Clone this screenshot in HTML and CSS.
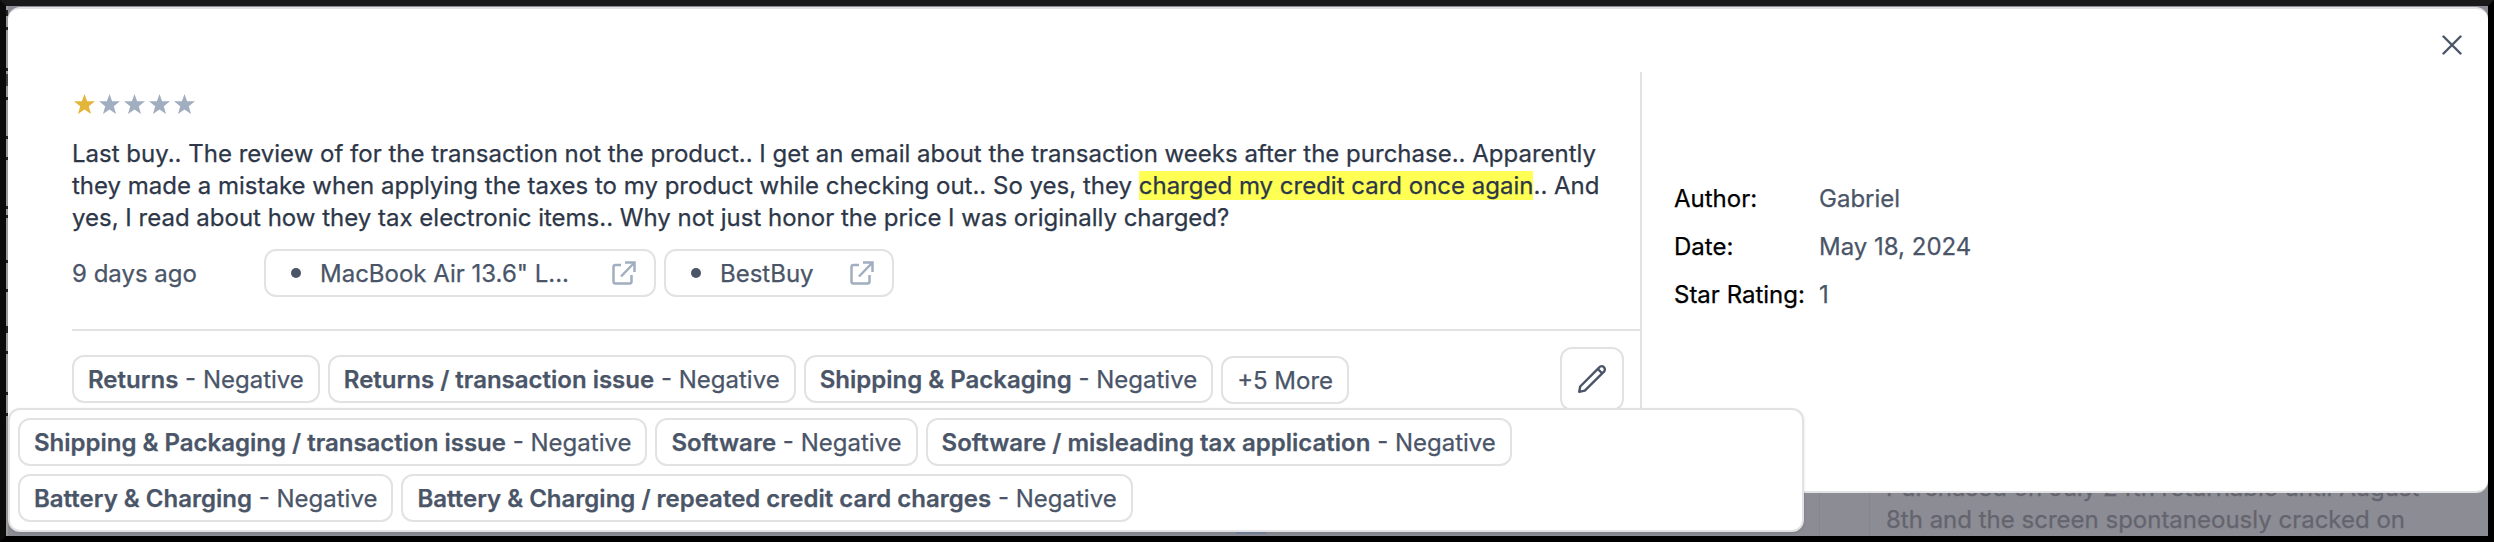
FILE: index.html
```html
<!DOCTYPE html>
<html lang="en">
<head>
<meta charset="utf-8">
<title>Review details</title>
<link rel="stylesheet" href="styles.css">
</head>
<body>
<svg class="defs" aria-hidden="true">
  <symbol id="star" viewBox="0 0 21 20"><path d="M10.5 0l2.6 7.3H21l-6.2 4.9 2.2 7.8-6.5-4.6L4 20l2.2-7.8L0 7.300h7.900z"/></symbol>
  <symbol id="external" viewBox="0 0 24 24"><path d="M9 4H3.500Q1.500 4 1.500 6V20.500Q1.500 22.500 3.500 22.500H17.500Q19.500 22.500 19.500 20.500V14M13 1.500H22.500V11M22 2L9 15.500"/></symbol>
</svg>
<div class="screen">
  <div class="backdrop">
    <div class="backdrop-icon"></div>
    <div class="backdrop-column"></div>
    <p class="backdrop-text">Purchased on July 24th returnable until August<br>8th and the screen spontaneously cracked on</p>
  </div>
  <main class="modal">
    <section class="review">
      <div class="stars">
        <svg class="star filled"><use href="#star"/></svg>
        <svg class="star"><use href="#star"/></svg>
        <svg class="star"><use href="#star"/></svg>
        <svg class="star"><use href="#star"/></svg>
        <svg class="star"><use href="#star"/></svg>
      </div>
      <p class="body">Last buy.. The review of for the transaction not the product.. I get an email about the transaction weeks after the purchase.. Apparently<br>they made a mistake when applying the taxes to my product while checking out.. So yes, they <mark>charged my credit card once again</mark>.. And<br>yes, I read about how they tax electronic items.. Why not just honor the price I was originally charged?</p>
      <div class="meta">
        <span class="age">9 days ago</span>
        <a class="source product"><i class="dot"></i><span>MacBook Air 13.6" L...</span><svg class="external"><use href="#external"/></svg></a>
        <a class="source store"><i class="dot"></i><span>BestBuy</span><svg class="external"><use href="#external"/></svg></a>
      </div>
      <div class="topics">
        <span class="chip"><b>Returns</b> - Negative</span>
        <span class="chip"><b>Returns / transaction issue</b> - Negative</span>
        <span class="chip"><b>Shipping &amp; Packaging</b> - Negative</span>
        <span class="chip more">+5 More</span>
        <button class="edit" aria-label="Edit"><svg viewBox="0 0 32 32"><path d="M3.200 28.800L4.200 23.500L23.300 4.300A3.200 3.200 0 0 1 28 8.700L8.800 27.600ZM21.800 6L26.200 10.300"/></svg></button>
      </div>
    </section>
    <aside class="details">
      <button class="close" aria-label="Close"><svg viewBox="0 0 20 20"><path d="M1.500 1.500L18.500 18.500M18.500 1.500L1.500 18.500"/></svg></button>
      <dl>
        <dt>Author:</dt><dd>Gabriel</dd>
        <dt>Date:</dt><dd>May 18, 2024</dd>
        <dt>Star Rating:</dt><dd>1</dd>
      </dl>
    </aside>
  </main>
  <div class="popover">
    <div class="popover-row">
      <span class="chip"><b>Shipping &amp; Packaging / transaction issue</b> - Negative</span>
      <span class="chip"><b>Software</b> - Negative</span>
      <span class="chip"><b>Software / misleading tax application</b> - Negative</span>
    </div>
    <div class="popover-row">
      <span class="chip"><b>Battery &amp; Charging</b> - Negative</span>
      <span class="chip"><b>Battery &amp; Charging / repeated credit card charges</b> - Negative</span>
    </div>
  </div>
</div>
</body>
</html>
```
FILE: styles.css
```css
* { box-sizing: border-box; }
body { margin: 0; font-family: Inter, "Liberation Sans", sans-serif; font-size: 24px; line-height: 32px; color: #4a5568; -webkit-text-stroke: 0.25px; }
p, dl, dd { margin: 0; }
button { background: none; padding: 0; border: 0; }
.defs { position: absolute; width: 0; height: 0; }
.screen {
  position: relative; width: 2494px; height: 542px; overflow: hidden; background: #8c8c94;
  border: 6px solid #000; border-top-color: #1a1a1a; border-left-color: #0b0b0b;
}
.backdrop {
  position: absolute; inset: 0; padding-left: 1230px; display: flex; align-items: flex-end;
  background:
    linear-gradient(#222 0 0) 0 4px / 2px 6px no-repeat,
    linear-gradient(#222 0 0) 0 21px / 2px 3px no-repeat,
    linear-gradient(#222 0 0) 0 62px / 2px 3px no-repeat,
    linear-gradient(#444 0 0) 0 68px / 2px 12px no-repeat,
    linear-gradient(#222 0 0) 0 91px / 2px 3px no-repeat,
    linear-gradient(#222 0 0) 0 130px / 2px 3px no-repeat,
    linear-gradient(#222 0 0) 0 151px / 2px 3px no-repeat,
    linear-gradient(#222 0 0) 0 200px / 2px 3px no-repeat,
    linear-gradient(#222 0 0) 0 209px / 2px 3px no-repeat,
    linear-gradient(#222 0 0) 0 254px / 2px 3px no-repeat,
    linear-gradient(#222 0 0) 0 283px / 2px 3px no-repeat,
    linear-gradient(#222 0 0) 0 320px / 2px 7px no-repeat,
    linear-gradient(#222 0 0) 0 345px / 2px 3px no-repeat,
    linear-gradient(#222 0 0) 0 386px / 2px 3px no-repeat,
    linear-gradient(#222 0 0) 0 407px / 2px 3px no-repeat,
    linear-gradient(#9b9b9b 0 0) 0 0 / 2px 100% no-repeat;
}
.backdrop-icon { width: 30px; height: 4px; margin-right: 553px; background: linear-gradient(#77849e 2px, transparent 2px); }
.backdrop-column { width: 51px; height: 60px; border: solid #85858d; border-width: 0 1px; }
.backdrop-text { margin-left: 16px; height: 64px; color: #64646e; white-space: nowrap; }
.modal {
  position: absolute; left: 2px; top: 1px; width: 2480px; height: 486px; display: flex;
  background: #fff; border: solid #e2e2e5; border-width: 2px 0; border-radius: 12px; padding-top: 63px;
}
.review { width: 1634px; padding-left: 64px; border-right: 2px solid #e2e2e2; }
.stars { display: flex; gap: 4px; padding: 22px 0 0 2px; }
.star { width: 21px; height: 20px; fill: #a0aec0; }
.star.filled { fill: #e3b53b; }
.body { margin-top: 24px; color: #2d3748; white-space: nowrap; }
mark { background: #ffff54; color: inherit; }
.meta { display: flex; gap: 8px; margin-top: 15px; align-items: center; }
.age { width: 184px; padding-top: 2px; }
.source { height: 48px; border: 2px solid #e2e2e2; border-radius: 12px; display: flex; align-items: center; padding: 0 18px 0 25px; white-space: nowrap; }
.source span { padding-top: 2px; }
.product { width: 392px; }
.store { width: 230px; }
.dot { width: 10px; height: 10px; border-radius: 50%; background: #4a5568; margin-right: 19px; }
.external { width: 24px; height: 24px; margin-left: auto; fill: none; stroke: #a0aec0; stroke-width: 2.500px; }
.topics { display: flex; gap: 8px; align-items: flex-start; margin-top: 32px; padding: 16px 16px 0 0; border-top: 2px solid #e2e2e2; }
.topics .chip { margin-top: 8px; }
.topics .more { margin-top: 9px; }
.chip { height: 48px; padding: 7px 14px 5px; border: 2px solid #e2e2e2; border-radius: 12px; white-space: nowrap; }
.chip b { font-weight: 600; }
.edit { width: 64px; height: 64px; margin-left: auto; border: 2px solid #e2e2e2; border-radius: 12px; display: grid; place-items: center; }
.edit svg { width: 32px; height: 32px; fill: none; stroke: #4a5568; stroke-width: 2.400px; stroke-linejoin: round; }
.details { position: relative; flex: 1; padding: 111px 0 0 32px; }
.details dl { display: grid; grid-template-columns: 145px auto; row-gap: 16px; }
.details dt { color: #000; white-space: nowrap; }
.close { position: absolute; right: 26px; top: -37px; width: 20px; height: 20px; }
.close svg { display: block; width: 20px; height: 20px; fill: none; stroke: #4a5568; stroke-width: 2.400px; stroke-linecap: round; }
.popover {
  position: absolute; left: 2px; top: 402px; width: 1796px; height: 124px; padding: 8px;
  background: #fff; border: 2px solid #e2e2e4; border-radius: 12px; display: grid; gap: 8px; box-shadow: 0 1px 3px rgba(0,0,0,.12);
}
.popover-row { display: flex; gap: 8px; }
```
